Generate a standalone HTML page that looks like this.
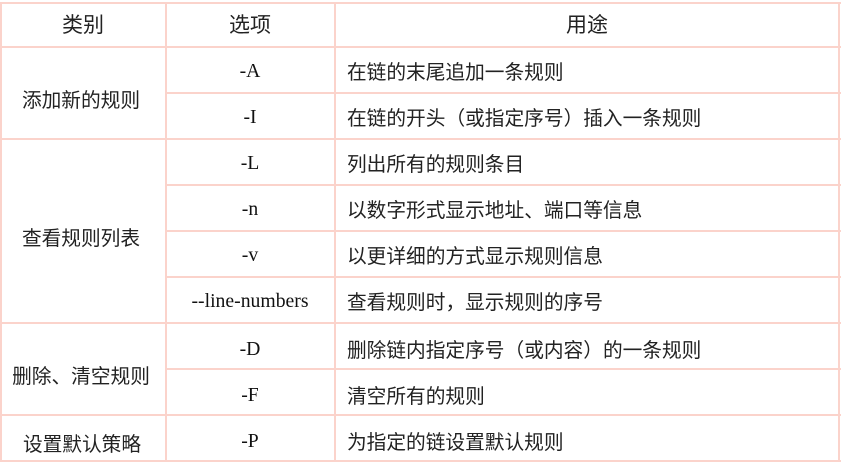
<!DOCTYPE html>
<html><head><meta charset="utf-8"><style>
body{margin:0;background:#fff;width:841px;height:464px;position:relative;overflow:hidden;font-family:"Liberation Serif","Noto Serif CJK SC",serif;color:#111}
.h{position:absolute;height:2px;background:#fbd3cb}
.v{position:absolute;width:2px;background:#fbd3cb}
.t{position:absolute;font-size:19.7px;line-height:24px;white-space:nowrap}
.c{transform:translateX(-50%)}
.z{font-family:"Noto Sans CJK SC",sans-serif;font-size:19.7px;color:#222}
.hd{font-size:21px;line-height:26px}
.p{display:inline-block;width:1em;text-align:center}
</style></head><body>
<div class="h" style="left:0;top:2px;width:841px"></div>
<div class="h" style="left:0;top:46px;width:841px"></div>
<div class="h" style="left:166px;top:92px;width:675px"></div>
<div class="h" style="left:0;top:138px;width:841px"></div>
<div class="h" style="left:166px;top:184px;width:675px"></div>
<div class="h" style="left:166px;top:230px;width:675px"></div>
<div class="h" style="left:166px;top:276px;width:675px"></div>
<div class="h" style="left:0;top:322px;width:841px"></div>
<div class="h" style="left:166px;top:368px;width:675px"></div>
<div class="h" style="left:0;top:414px;width:841px"></div>
<div class="h" style="left:0;top:460px;width:841px"></div>
<div class="v" style="left:0;top:2px;height:460px"></div>
<div class="v" style="left:165px;top:2px;height:460px"></div>
<div class="v" style="left:334px;top:2px;height:460px"></div>
<div class="v" style="left:838px;top:2px;height:460px"></div>

<div class="t z hd c" style="left:83px;top:11px">类别</div>
<div class="t z hd c" style="left:250px;top:11px">选项</div>
<div class="t z hd c" style="left:587px;top:11px">用途</div>

<div class="t z c" style="left:81px;top:87px">添加新的规则</div>
<div class="t z c" style="left:81px;top:225px">查看规则列表</div>
<div class="t z c" style="left:81px;top:363px">删除<span class="p">、</span>清空规则</div>
<div class="t z c" style="left:82px;top:431px">设置默认策略</div>

<div class="t c" style="left:250px;top:59px">-A</div>
<div class="t c" style="left:250px;top:105px">-I</div>
<div class="t c" style="left:250px;top:151px">-L</div>
<div class="t c" style="left:250px;top:197px">-n</div>
<div class="t c" style="left:250px;top:243px">-v</div>
<div class="t c" style="left:250px;top:289px">--line-numbers</div>
<div class="t c" style="left:250px;top:337px">-D</div>
<div class="t c" style="left:250px;top:383px">-F</div>
<div class="t c" style="left:250px;top:429px">-P</div>

<div class="t z" style="left:347px;top:59px">在链的末尾追加一条规则</div>
<div class="t z" style="left:347px;top:105px">在链的开头<span class="p">（</span>或指定序号<span class="p">）</span>插入一条规则</div>
<div class="t z" style="left:347px;top:151px">列出所有的规则条目</div>
<div class="t z" style="left:347px;top:197px">以数字形式显示地址<span class="p">、</span>端口等信息</div>
<div class="t z" style="left:347px;top:243px">以更详细的方式显示规则信息</div>
<div class="t z" style="left:347px;top:289px">查看规则时<span class="p">，</span>显示规则的序号</div>
<div class="t z" style="left:347px;top:337px">删除链内指定序号<span class="p">（</span>或内容<span class="p">）</span>的一条规则</div>
<div class="t z" style="left:347px;top:383px">清空所有的规则</div>
<div class="t z" style="left:347px;top:429px">为指定的链设置默认规则</div>
</body></html>
